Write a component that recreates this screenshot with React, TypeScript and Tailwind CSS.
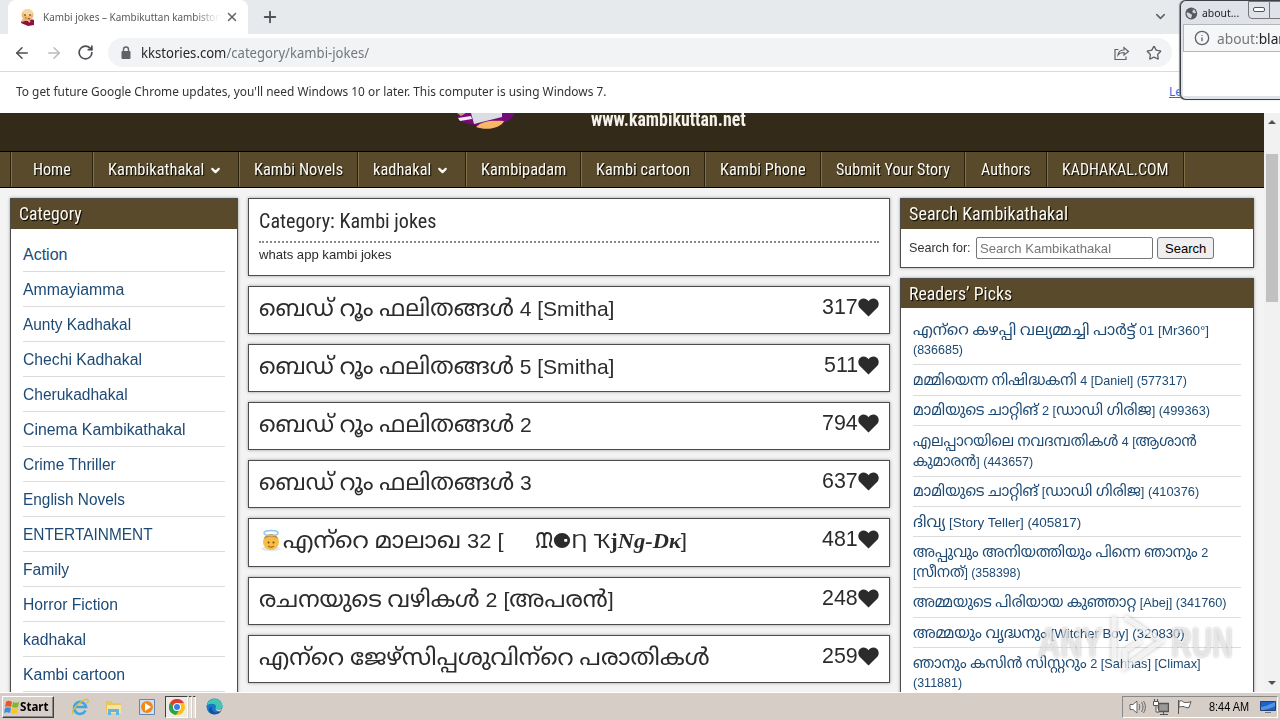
import { ReactNode, useLayoutEffect, useRef, useState } from "react";
import { ArrowLeft, ArrowRight, RotateCw, ChevronDown, Plus, X, Star, Info } from "lucide-react";

// text squeezed or stretched to a fixed width
const Fit = ({ w, className = "", children }: { w: number; className?: string; children: ReactNode }) => {
    const ref = useRef<HTMLSpanElement>(null)
    const [scale, setScale] = useState(1)

    useLayoutEffect(() => {
        if (ref.current) setScale(w / ref.current.offsetWidth)
    }, [w])

    return (
        <span className={"block shrink-0 whitespace-nowrap " + className} style={{ width: w }}>
            <span ref={ref} className="inline-block origin-left" style={{ transform: `scaleX(${scale})` }}>{children}</span>
        </span>
    )
}

// Malayalam runs are set a little larger than the latin text around them
const mixed = (text: string, size: string) =>
    text.split(/([\u0d00-\u0d7f\u200c]+)/).map((part, i) => i % 2 ? <span key={i} className={size}>{part}</span> : part)

const nav = [
    { label: "Home", w: 38, box: "w-[82px] pl-[22px]" },
    { label: "Kambikathakal", w: 96, box: "w-[146px] pl-[15px]", menu: true },
    { label: "Kambi Novels", w: 89, box: "w-[119px] pl-[15px]" },
    { label: "kadhakal", w: 58, box: "w-[108px] pl-[15px]", menu: true },
    { label: "Kambipadam", w: 85, box: "w-[115px] pl-[15px]" },
    { label: "Kambi cartoon", w: 94, box: "w-[124px] pl-[15px]" },
    { label: "Kambi Phone", w: 86, box: "w-[116px] pl-[15px]" },
    { label: "Submit Your Story", w: 114, box: "w-[144px] pl-[15px]" },
    { label: "Authors", w: 50, box: "w-[82px] pl-4" },
    { label: "KADHAKAL.COM", w: 107, box: "w-[137px] pl-[15px]" },
]

const categories = [
    { label: "Action", w: 44 },
    { label: "Ammayiamma", w: 101 },
    { label: "Aunty Kadhakal", w: 108 },
    { label: "Chechi Kadhakal", w: 119 },
    { label: "Cherukadhakal", w: 105 },
    { label: "Cinema Kambikathakal", w: 163 },
    { label: "Crime Thriller", w: 93 },
    { label: "English Novels", w: 102 },
    { label: "ENTERTAINMENT", w: 130 },
    { label: "Family", w: 46 },
    { label: "Horror Fiction", w: 95 },
    { label: "kadhakal", w: 63 },
    { label: "Kambi cartoon", w: 102 },
]

const stories = [
    { title: "ബെഡ് റൂം ഫലിതങ്ങൾ 4 [Smitha]", w: 355, likes: 317 },
    { title: "ബെഡ് റൂം ഫലിതങ്ങൾ 5 [Smitha]", w: 355, likes: 511 },
    { title: "ബെഡ് റൂം ഫലിതങ്ങൾ 2", w: 273, likes: 794 },
    { title: "ബെഡ് റൂം ഫലിതങ്ങൾ 3", w: 273, likes: 637 },
    { title: "angel", w: 428, likes: 481 },
    { title: "രചനയുടെ വഴികൾ 2 [അപരൻ]", w: 355, likes: 248 },
    { title: "എന്\u200cറെ ജേഴ്സിപ്പശുവിന്\u200cറെ പരാതികൾ", w: 451, likes: 259 },
]

const picks = [
    [["എന്\u200cറെ കഴപ്പി വല്യമ്മച്ചി പാർട്ട് 01 [Mr360°]", 296], ["(836685)", 50]],
    [["മമ്മിയെന്ന നിഷിദ്ധകനി 4 [Daniel] (577317)", 274]],
    [["മാമിയുടെ ചാറ്റിങ് 2 [ഡാഡി ഗിരിജ] (499363)", 297]],
    [["എലപ്പാറയിലെ നവദമ്പതികൾ 4 [ആശാൻ", 284], ["കുമാരൻ] (443657)", 120]],
    [["മാമിയുടെ ചാറ്റിങ് [ഡാഡി ഗിരിജ] (410376)", 286]],
    [["ദിവ്യ [Story Teller] (405817)", 168]],
    [["അപ്പുവും അനിയത്തിയും പിന്നെ ഞാനും 2", 295], ["[സീനത്] (358398)", 108]],
    [["അമ്മയുടെ പിരിയായ കുഞ്ഞാറ്റ [Abej] (341760)", 314]],
    [["അമ്മയും വൃദ്ധനും [Witcher Boy] (320830)", 272]],
    [["ഞാനും കസിൻ സിസ്റ്ററും 2 [Sahnas] [Climax]", 288], ["(311881)", 49]],
] as [string, number][][]

const Heart = () => (
    <svg className="w-[21px] h-[19px]" viewBox="0 0 22 20" fill="#2b2b2b">
        <path d="M11 19.5 2 10.5C-.5 8-.2 3.800 2.300 1.800 5-.4 8.800.2 11 3.400 13.200.2 17-.4 19.700 1.800c2.500 2 2.800 6.200.3 8.700z" />
    </svg>
)

const PanelTitle = ({ w, size = "h-[30px]", children }: { w: number; size?: string; children: ReactNode }) => (
    <div className={"shrink-0 bg-[#594a2b] pl-2 text-[18px] leading-[30px] text-[#fdf9ee] font-['Roboto_Condensed','Roboto',sans-serif] [text-shadow:1px_1px_1px_#000] " + size}>
        <Fit w={w}>{children}</Fit>
    </div>
)

const AngelTitle = () => (
    <div className="-mt-1 flex items-center">
        <svg className="w-6 h-6 mt-px shrink-0" viewBox="0 0 24 24">
            <path d="M2 20c3-4 17-4 20 0-3 3-17 3-20 0" fill="#dceaf5" />
            <circle cx="12" cy="13" r="8" fill="#f9bd45" />
            <path d="M5 10c1-6 13-6 14 0-4-3-10-3-14 0" fill="#b98d4b" />
            <ellipse cx="12" cy="4" rx="7" ry="2.500" fill="none" stroke="#8ec9ee" strokeWidth="1.500" />
            <circle cx="9.500" cy="13.500" r="1" fill="#6b4520" />
            <circle cx="14.500" cy="13.500" r="1" fill="#6b4520" />
            <path d="M9 17c2 1.500 4 1.500 6 0" fill="none" stroke="#8d5220" />
        </svg>
        <Fit w={220}>{mixed("എന്\u200cറെ മാലാഖ 32 [", "text-[23px]")}</Fit>
        <Fit w={152} className="ml-8">ᙢ⚈Ƞ Ҡ<b className="font-['Liberation_Serif',serif]">j<i>Ng-Dκ</i></b>]</Fit>
    </div>
)

const Browser = () => (
    <div className="shrink-0 bg-white font-['Noto_Sans',sans-serif]">
        <div className="flex h-[34px] bg-[#e7eaed] pl-2">
            <div className="flex w-60 items-center rounded-t-lg bg-white pl-[11px]">
                <svg className="w-[18px] h-[18px]" viewBox="0 0 18 18">
                    <path d="M3 12 9 10l6 2v5l-6 1-7-3z" fill="#8c1243" />
                    <circle cx="8.500" cy="7" r="6" fill="#eebc78" />
                    <path d="M4 4c1-4 9-4 10 1l-3 3-6-1z" fill="#f7d69c" />
                    <path d="M5 7h2m3 0h2M6 10l5 1" stroke="#5b241c" />
                    <path d="m3 13 5-2 3 3" stroke="#f0b070" strokeWidth="2" fill="none" />
                </svg>
                <div className="relative ml-1.5 text-[11px] text-[#55595d]">
                    <Fit w={176}>Kambi jokes – Kambikuttan kambistor</Fit>
                    <div className="absolute right-0 top-0 h-full w-6 bg-linear-to-r from-transparent to-white" />
                </div>
                <X className="ml-[6px] text-[#5f6368]" size={14} strokeWidth={2.5} />
            </div>
            <Plus className="ml-[13px] mt-2 text-[#50545a]" size={18} strokeWidth={2.5} />
            <ChevronDown className="ml-auto mr-[112px] mt-[9px] text-[#5f6368]" size={15} strokeWidth={2.5} />
        </div>
        <div className="flex h-[38px] items-center border-b border-[#d9dadc]">
            <ArrowLeft className="ml-[13px] text-[#4b4e52]" size={18} />
            <ArrowRight className="ml-[14px] text-[#b9bbbd]" size={18} />
            <RotateCw className="ml-[14px] text-[#4b4e52]" size={17} strokeWidth={2.4} />
            <div className="ml-[14px] flex h-[29px] w-[1064px] items-center rounded-full bg-[#f1f3f4] pl-3 text-[15px]">
                <svg className="w-3 h-4" viewBox="0 0 12 16">
                    <rect x="1.500" y="6" width="9" height="8" rx="1" fill="#5f6368" />
                    <path d="M3.500 7V4.500a2.500 2.500 0 0 1 5 0V7" fill="none" stroke="#5f6368" strokeWidth="1.400" />
                </svg>
                <Fit w={228} className="ml-[9px] text-[#72777d]"><span className="text-[#25282b]">kkstories.com</span>/category/kambi-jokes/</Fit>
                <svg className="ml-auto w-4 h-4" viewBox="0 0 16 16" fill="none" stroke="#5f6368" strokeWidth="1.200">
                    <path d="M4.500 4.500H1v10h11v-3M4 10c.5-4 3-5 6-5V2.500l4.500 4L10 10V7.500C7.500 7.500 5.500 8 4 10z" />
                </svg>
                <Star className="ml-4 mr-2.5 text-[#5f6368]" size={16} />
            </div>
        </div>
        <div className="flex h-[41px] items-center pl-4 pb-0.5 text-[12px] text-[#333]">
            <Fit w={590}>To get future Google Chrome updates, you'll need Windows 10 or later. This computer is using Windows 7.</Fit>
            <span className="ml-[563px] text-[#1a73e8] underline">Learn</span>
        </div>
    </div>
)

const Popup = () => (
    <div className="absolute left-[1180px] top-0 h-[100px] w-[110px] rounded-l-md border border-r-0 border-[#3e4046] bg-[#dfe2e8] pl-0.5 shadow-[-1px_0_1px_#888]">
        <div className="flex h-[23px] items-center pl-0.5 pt-px font-['Noto_Sans',sans-serif]">
            <svg className="w-[15px] h-[15px]" viewBox="0 0 16 16">
                <circle cx="8" cy="8" r="7.500" fill="#55585d" />
                <path d="M2 7c3-1 4 1 6 2s0 3 0 5c-4 0-6-4-6-7M8 2l3 1-2 3 3 2 2-1c-1-3-3-5-6-5" fill="#d5d8dd" />
            </svg>
            <Fit w={37} className="ml-1 text-[11px] text-[#222]">about...</Fit>
            <div className="ml-[9px] -mt-[7px] flex h-[18px] w-[26px] items-center justify-center rounded-bl border border-[#777]">
                <div className="h-[5px] w-3 rounded-xs border border-[#555] bg-white" />
            </div>
            <div className="-mt-[7px] h-[18px] w-6 border border-l-0 border-[#777]" />
        </div>
        <div className="flex h-7 items-center border border-[#b4b6b9] bg-[#f5f6f8] pl-2.5 font-['Noto_Sans',sans-serif] text-[15px] text-[#777]">
            <Info className="mr-[7px] shrink-0 text-[#5f6368]" size={16} />
            <Fit w={77}>about:<span className="text-[#222]">blank</span></Fit>
        </div>
        <div className="h-[44px] bg-white" />
    </div>
)

const Header = () => (
    <>
        <div className="flex h-[38px] shrink-0 overflow-hidden bg-[#332a19]">
            <svg className="ml-[456px] h-4 w-[62px] shrink-0" viewBox="0 0 62 16">
                <path d="M4 0h55c-4 9-16 13-28 13C18 13 6 10 1 5z" fill="#750b79" />
                <path d="M1 0h9L5 3z" fill="#d79c83" />
                <path d="m2 5 13-2 1 3-12 2z" fill="#f4e8f4" />
                <path d="M15 0h31v4l-28 7z" fill="#dadde1" />
                <path d="M20 14c6-6 14-7 28-6-3 7-17 10-28 6" fill="#f7b765" />
            </svg>
            <Fit w={155} className="-mt-1.5 ml-[73px] font-['Roboto_Condensed','Roboto',sans-serif] text-[20px] font-bold leading-6 text-[#f6f3ec]">www.kambikuttan.net</Fit>
        </div>
        <div className="flex h-[37px] shrink-0 border-y border-black bg-[#594a2b] pl-2.5 font-['Roboto_Condensed','Roboto',sans-serif] text-[17px] text-[#fdfaf2] [text-shadow:1px_1px_1px_#000]">
            {nav.map((n) => (
                <div key={n.label} className={"flex shrink-0 items-center border-l border-[#2b220e] shadow-[inset_1px_0_0_#80704a] " + n.box}>
                    <Fit w={n.w}>{n.label}</Fit>
                    {n.menu && <ChevronDown className="ml-[5px] mt-px" size={13} strokeWidth={4} />}
                </div>
            ))}
            <div className="border-l border-[#2b220e] shadow-[inset_1px_0_0_#80704a] w-1" />
        </div>
    </>
)

const panel = "border border-[#4c4c4c] bg-white shadow-[0_0_3px_#999]"

const Site = () => (
    <div className="flex min-w-0 flex-1 flex-col overflow-hidden bg-[#f3f3f3]">
        <Header />
        <div className="flex gap-2.5 pl-2.5 pt-2.5 font-['Liberation_Sans','Noto_Sans_Malayalam',sans-serif]">
            <aside className={"flex h-[560px] w-[228px] flex-col " + panel}>
                <PanelTitle w={63}>Category</PanelTitle>
                <ul className="px-3 pt-2">
                    {categories.map((c) => (
                        <li key={c.label} className="flex h-[35px] items-center border-b border-[#dcdcdc] pt-0.5 text-[16px] text-[#1d4a74]">
                            <Fit w={c.w}>{c.label}</Fit>
                        </li>
                    ))}
                </ul>
            </aside>
            <main className="flex w-[642px] flex-col gap-2.5 text-[#2b2b2b]">
                <div className={"h-[78px] px-2.5 " + panel}>
                    <div className="h-[44px] border-b-2 border-dotted border-[#888] pt-[5px] font-['Roboto_Condensed','Roboto',sans-serif] text-[20px] leading-[34px]">
                        <Fit w={177}>Category: Kambi jokes</Fit>
                    </div>
                    <Fit w={133} className="mt-0.5 text-[13px]">whats app kambi jokes</Fit>
                </div>
                {stories.map((s, i) => (
                    <div key={i} className={"flex justify-between px-2.5 text-[21px] leading-[42px] " + panel + (i === 4 ? " h-[49px]" : " h-12")}>
                        {i === 4 ? <AngelTitle /> : <Fit w={s.w}>{mixed(s.title, "text-[23px]")}</Fit>}
                        <div className="flex h-[41px] items-center text-[22px]">
                            <Fit w={s.likes === 511 ? 34 : 36} className="-mt-px">{s.likes}</Fit>
                            <Heart />
                        </div>
                    </div>
                ))}
            </main>
            <aside className="flex w-[354px] flex-col gap-2.5">
                <div className={"h-[70px] " + panel}>
                    <PanelTitle w={159}>Search Kambikathakal</PanelTitle>
                    <div className="flex h-[38px] items-center pl-2 text-[13px] text-[#333]">
                        <Fit w={62}>Search for:</Fit>
                        <div className="ml-[5px] flex h-[22px] w-[177px] items-center rounded-xs border border-[#767676] pl-[3px] text-[#777]">
                            <Fit w={131} className="mt-px">Search Kambikathakal</Fit>
                        </div>
                        <div className="ml-1 flex h-[22px] w-[57px] items-center justify-center rounded-[3px] border border-[#767676] bg-[#efefef] text-black">
                            <Fit w={41} className="mt-px">Search</Fit>
                        </div>
                    </div>
                </div>
                <div className={"flex h-[480px] flex-col " + panel}>
                    <PanelTitle w={103} size="h-[29px]">Readers’ Picks</PanelTitle>
                    <ul className="px-3 pt-[7px]">
                        {picks.map((lines, i) => (
                            <li key={i} className="border-b border-[#dcdcdc] py-[4.7px] text-[13px] text-[#1d4a74]">
                                {lines.map(([text, w]) => (
                                    <Fit key={text} w={w} className="h-5 leading-5">{mixed(text, "text-[15px]")}</Fit>
                                ))}
                            </li>
                        ))}
                    </ul>
                </div>
            </aside>
        </div>
    </div>
)

const Scrollbar = () => (
    <div className="flex w-4 shrink-0 flex-col items-center bg-[#f1f1f1]">
        <div className="mt-[7px] border-x-4 border-b-4 border-x-transparent border-b-[#505050]" />
        <div className="mt-[30px] h-[148px] w-3 bg-[#c1c1c1]" />
        <div className="mb-[7px] mt-auto border-x-4 border-t-4 border-x-transparent border-t-[#505050]" />
    </div>
)

const Watermark = () => (
    <div className="absolute left-[1038px] top-[612px] flex items-center font-['Liberation_Sans',sans-serif] text-[42px] leading-[60px] text-white/60 [text-shadow:0_0_3px_rgba(0,0,0,0.3)]">
        <Fit w={65} className="font-bold">ANY</Fit>
        <svg className="ml-1 mr-0.5 h-[62px] w-[62px] drop-shadow-[0_0_2px_rgba(0,0,0,0.35)]" viewBox="0 0 62 60" fill="none" stroke="#fff" strokeOpacity=".7" strokeWidth="5">
            <path d="M7 4v44M18 4l36 24-36 26V38l16-10" />
        </svg>
        <Fit w={62} className="font-bold">RUN</Fit>
    </div>
)

const Taskbar = () => (
    <div className="flex h-7 shrink-0 items-center border-t border-white bg-[#d6cec6] pl-0.5 font-['Noto_Sans',sans-serif] text-[12px] text-black">
        <div className="flex h-[22px] w-[52px] items-center border border-b-[#404040] border-l-white border-r-[#404040] border-t-white pl-px shadow-[inset_-1px_-1px_0_#888]">
            <svg className="h-4 w-4" viewBox="0 0 16 16">
                <path d="M2 3c2-2 4-1 6 0L7 8C5 7 3 7 1 8z" fill="#e8562a" />
                <path d="M9 3c2 1 4 1 6 0l-1 5c-2 1-4 1-6 0z" fill="#7db928" />
                <path d="M1 9c2-1 4-1 6 0l-1 5c-2-1-4-1-6 0z" fill="#3c8ede" />
                <path d="M8 9c2 1 4 1 6 0l-1 5c-2 1-4 1-6 0z" fill="#fcc525" />
            </svg>
            <Fit w={29} className="font-bold">Start</Fit>
        </div>
        <svg className="ml-[17px] h-[18px] w-[18px]" viewBox="0 0 18 18" fill="none">
            <path d="M14.500 12.500A6 6 0 1 1 15 9H5" stroke="#3da7e0" strokeWidth="2.600" />
            <path d="M2 16C-2 12 15-2 17 2c.5 1-.5 3-1 3" stroke="#e8b83c" strokeWidth="1.400" />
        </svg>
        <svg className="ml-4 h-[18px] w-[17px]" viewBox="0 0 17 18">
            <path d="M1 3h6l1 2h8v10H1z" fill="#e8c65c" />
            <path d="M2 7h14v8H2z" fill="#f6e3a0" />
            <path d="M3 11h11v6h-3v-3H6v3H3z" fill="#63b5de" />
        </svg>
        <svg className="ml-[17px] h-4 w-4" viewBox="0 0 16 16">
            <path d="M.5.5h15v15H.5z" fill="#cfe2f3" stroke="#6486ad" />
            <circle cx="8" cy="8" r="6" fill="#f08a1c" />
            <path d="m6 4 6 4-6 4z" fill="#fff" />
        </svg>
        <div className="ml-[10px] flex h-[22px] w-[23px] items-center justify-center border border-b-white border-l-[#404040] border-r-white border-t-[#404040] bg-[#eeebe7]">
            <svg className="h-4 w-4" viewBox="0 0 16 16">
                <circle cx="8" cy="8" r="8" fill="#fbc116" />
                <path d="M1 4a8 8 0 0 1 14 0H8L5 9z" fill="#e33b2e" />
                <path d="M1 4a8 8 0 0 0 6 12l4-6-6-1z" fill="#2ba24c" />
                <circle cx="8" cy="8" r="4" fill="#fff" />
                <circle cx="8" cy="8" r="3" fill="#3b7de9" />
            </svg>
        </div>
        <div className="ml-px h-[22px] w-[3px] border-r border-t border-r-white border-t-[#404040] bg-[#e5e0da]" />
        <div className="ml-px h-[22px] w-[3px] border-r border-t border-r-white border-t-[#404040] bg-[#e5e0da]" />
        <svg className="ml-[10px] h-[17px] w-[17px]" viewBox="0 0 17 17">
            <circle cx="8.500" cy="8.500" r="8" fill="#1878c8" />
            <path d="M1 7C3-1 16-1 16.500 8c0 4-6 4-7 2 2-3-2-6-8.500-3" fill="#42c6b4" />
            <path d="M6 9c-1 5 4 7 9 4-3 5-12 4-12-1 0-2 1-3 3-3" fill="#12529e" />
            <path d="M9.500 10c1 2 5 2 7 0l-2 3c-3 1-5-1-5-3" fill="#d6cec6" />
        </svg>
        <div className="ml-auto mr-0.5 flex h-[22px] w-[156px] items-center border border-b-white border-l-[#888] border-r-white border-t-[#888] pl-[6px]">
            <svg className="h-4 w-[17px]" viewBox="0 0 17 16" fill="#fff" stroke="#666">
                <path d="M1 5.500h3L8 2v12l-4-3.500H1z" />
                <path d="M10 5c1 2 1 4 0 6m2.500-8c2 3 2 7 0 10m2-11c2.500 4 2.500 8 0 12" fill="none" />
            </svg>
            <svg className="ml-[7px] h-4 w-4" viewBox="0 0 16 16" fill="#fff" stroke="#555">
                <path d="M5.500 4.500h10v8h-10z" fill="#999" strokeWidth="1.500" />
                <path d="M7 15.500h8M10.500 13v2M.5 2.500h5v4h-5zM1.500 0v2m3-2v2M3 7v6h3" />
            </svg>
            <svg className="ml-[7px] h-4 w-[17px]" viewBox="0 0 17 16" fill="#fff" stroke="#555">
                <path d="M2.500 1v14M3 2.500c3-2 4 1 6 1s4 0 6-1c-1 2-1 4-2 6-3 1-4-1-6-1s-3 0-4 1z" />
            </svg>
            <Fit w={40} className="ml-4 font-['Liberation_Sans',sans-serif] text-[12px]">8:44 AM</Fit>
            <svg className="ml-[11px] h-[15px] w-4" viewBox="0 0 16 15">
                <path d="M.5 2.500h15v9H.5z" fill="#1d62c7" stroke="#25406e" />
                <path d="M1 8c5 0 9-3 14-5v4C11 9 6 11 1 11z" fill="#4f94e5" />
                <path d="M5 13h6v1H5z" fill="#777" />
            </svg>
        </div>
    </div>
)

export default function App() {
    return (
        <div className="relative flex h-[720px] w-[1280px] flex-col overflow-hidden bg-white">
            <Browser />
            <div className="flex min-h-0 flex-1">
                <Site />
                <Scrollbar />
            </div>
            <Taskbar />
            <Popup />
            <Watermark />
        </div>
    )
}
